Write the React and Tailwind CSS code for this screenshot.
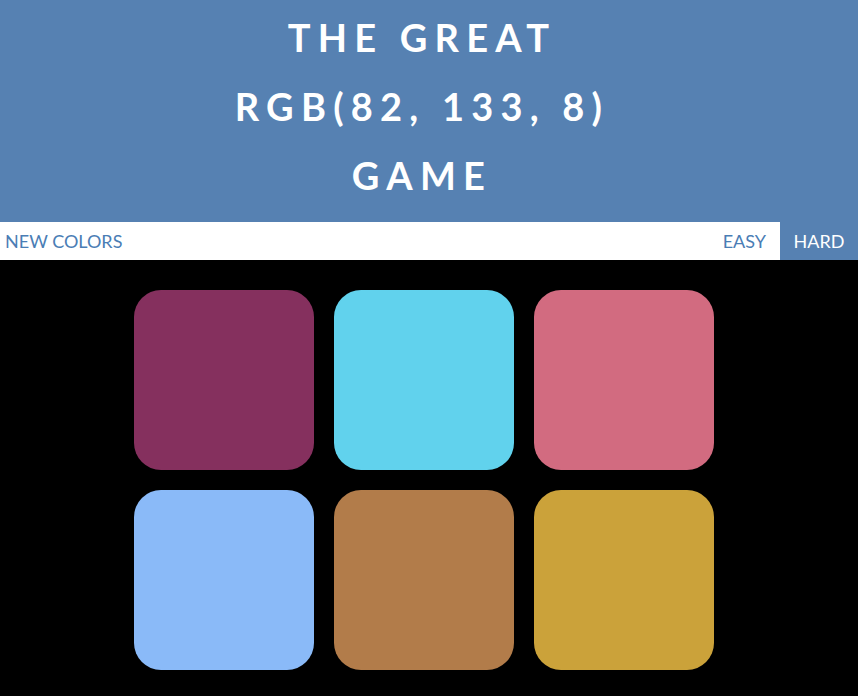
import React from 'react';

const colors = [
  'rgb(133, 48, 94)',
  'rgb(97, 210, 237)',
  'rgb(210, 107, 128)',
  'rgb(138, 186, 248)',
  'rgb(178, 124, 74)',
  'rgb(203, 162, 58)',
];

const App = () => {
  return (
    <div className="min-h-screen w-full bg-black" style={{ fontFamily: 'Lato, "Open Sans", sans-serif' }}>
      {/* Titel */}
      <h1 className="bg-[#5681b2] text-white text-center font-bold uppercase text-[38px] tracking-[0.19em] pt-[3px] pb-[13px] pr-[14px]">
        <div className="leading-[69px]">The Great</div>
        <div className="leading-[69px]">RGB(82, 133, 8)</div>
        <div className="leading-[68px]">Game</div>
      </h1>
      {/* Leiste */}
      <div className="flex h-[38px] items-stretch bg-white text-[18px] text-[#4a7db5]">
        <button className="px-[5px] uppercase">New Colors</button>
        <div className="flex-1" />
        <button className="px-[14px] uppercase">Easy</button>
        <button className="w-[78px] bg-[#5681b2] text-white uppercase">Hard</button>
      </div>
      {/* Felder */}
      <div className="flex justify-center pr-[10px] pt-[30px] pb-[30px]">
        <div className="grid grid-cols-3 gap-[20px] w-[580px]">
          {colors.map((c, i) => (
            <div key={i} className="h-[180px] w-[180px] rounded-[15%]" style={{ backgroundColor: c }} />
          ))}
        </div>
      </div>
    </div>
  );
};

export default App;
